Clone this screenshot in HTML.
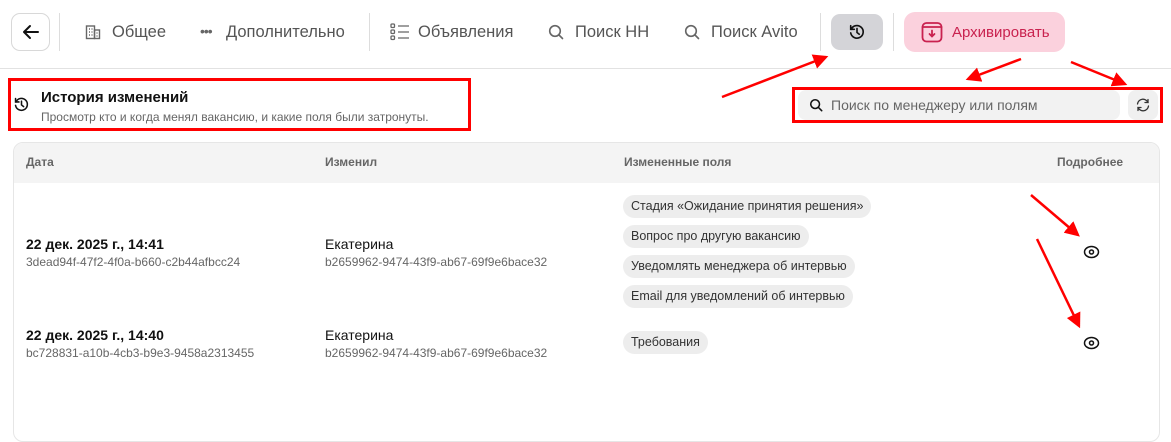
<!DOCTYPE html>
<html><head><meta charset="utf-8"><style>
*{box-sizing:border-box;margin:0;padding:0}
body{width:1171px;height:426px;overflow:hidden;background:#fff;font-family:"Liberation Sans",sans-serif;color:#111;position:relative}
.a{position:absolute}
.nav{font-size:16.5px;color:#555;top:23px}
.sep{position:absolute;width:1px;background:#ddd;top:13px;height:38px}
.chip{position:absolute;left:623px;height:23px;border-radius:12px;background:#ededed;font-size:12.5px;color:#333;padding:0 8px;line-height:23px;white-space:nowrap}
.d{font-size:14px;font-weight:bold;color:#111}
.id{font-size:12px;color:#666}
</style></head><body>
<div class="a" style="left:11px;top:13px;width:39px;height:38px;border:1.5px solid #d8d8d8;border-radius:9px"></div>
<svg class="a" style="left:21px;top:23px" width="20" height="18" viewBox="0 0 20 18"><path d="M17 9H3M9 3L3 9l6 6" stroke="#111" stroke-width="2" fill="none" stroke-linecap="round" stroke-linejoin="round"/></svg>
<div class="sep" style="left:59px"></div>
<svg class="a" style="left:85px;top:24px" width="16" height="16" viewBox="0 0 16 16" fill="none" stroke="#666" stroke-width="1.4"><rect x="1.5" y="2" width="8" height="12.5"/><rect x="9.5" y="6" width="5" height="8.5"/><path d="M4 5h1M6.5 5h1M4 8h1M6.5 8h1M4 11h1M6.5 11h1M11.5 9h1M11.5 12h1"/></svg>
<div class="a nav" style="left:112px">Общее</div>
<div class="a" style="left:200px;top:23px;font-size:14px;color:#666;letter-spacing:-1px">•••</div>
<div class="a nav" style="left:226px">Дополнительно</div>
<div class="sep" style="left:369px"></div>
<svg class="a" style="left:390px;top:23px" width="20" height="18" viewBox="0 0 20 18" fill="none" stroke="#666" stroke-width="1.3"><rect x="1" y="1" width="3.5" height="3.5" rx="1"/><rect x="1" y="7" width="3.5" height="3.5" rx="1"/><rect x="1" y="13" width="3.5" height="3.5" rx="1"/><path d="M8 3h11M8 9h11M8 15h11"/></svg>
<div class="a nav" style="left:418px">Объявления</div>
<svg class="a" style="left:548px;top:24px" width="16" height="16" viewBox="0 0 16 16" fill="none" stroke="#666" stroke-width="1.6"><circle cx="7" cy="7" r="5.3"/><path d="M11 11l3.5 3.5" stroke-linecap="round"/></svg>
<div class="a nav" style="left:575px">Поиск HH</div>
<svg class="a" style="left:684px;top:24px" width="16" height="16" viewBox="0 0 16 16" fill="none" stroke="#666" stroke-width="1.6"><circle cx="7" cy="7" r="5.3"/><path d="M11 11l3.5 3.5" stroke-linecap="round"/></svg>
<div class="a nav" style="left:711px">Поиск Avito</div>
<div class="sep" style="left:820px"></div>
<div class="a" style="left:831px;top:14px;width:52px;height:36px;background:#d4d4d8;border-radius:9px"></div>
<svg class="a" style="left:847px;top:23px" width="20" height="18" viewBox="0 0 20 20" fill="none" stroke="#111" stroke-width="1.8" stroke-linecap="round"><path d="M3.5 7A7 7 0 1 1 3 11"/><path d="M3 3v4h4"/><path d="M10 6v4.5l2.5 2"/></svg>
<div class="sep" style="left:893px"></div>
<div class="a" style="left:904px;top:12px;width:161px;height:40px;background:#fbd1dd;border-radius:11px"></div>
<svg class="a" style="left:920px;top:20px" width="24" height="24" viewBox="0 0 24 24" fill="none" stroke="#c9224f" stroke-width="1.8" stroke-linecap="round"><rect x="2.5" y="3" width="19" height="18.5" rx="4"/><path d="M2.5 7h19"/><path d="M12 10.5v6M9.5 14l2.5 2.5 2.5-2.5"/></svg>
<div class="a" style="left:952px;top:24px;font-size:15px;color:#c9224f">Архивировать</div>
<div class="a" style="left:0;top:68px;width:1171px;height:1px;background:#e2e2e2"></div>

<div class="a" style="left:8px;top:78px;width:463px;height:53px;border:3px solid #f00"></div>
<svg class="a" style="left:13px;top:96px" width="17" height="17" viewBox="0 0 20 20" fill="none" stroke="#111" stroke-width="1.8" stroke-linecap="round"><path d="M3.5 7A7 7 0 1 1 3 11"/><path d="M3 3v4h4"/><path d="M10 6v4.5l2.5 2"/></svg>
<div class="a" style="left:41px;top:89px;font-size:15px;font-weight:bold">История изменений</div>
<div class="a" style="left:41px;top:110px;font-size:12px;color:#666">Просмотр кто и когда менял вакансию, и какие поля были затронуты.</div>

<div class="a" style="left:792px;top:87px;width:371px;height:36px;border:3px solid #f00"></div>
<div class="a" style="left:798px;top:90px;width:322px;height:30px;background:#f2f2f2;border-radius:8px"></div>
<svg class="a" style="left:809px;top:98px" width="14" height="14" viewBox="0 0 16 16" fill="none" stroke="#111" stroke-width="1.8"><circle cx="7" cy="7" r="5"/><path d="M11 11l3.5 3.5" stroke-linecap="round"/></svg>
<div class="a" style="left:831px;top:97px;font-size:14px;color:#666">Поиск по менеджеру или полям</div>
<div class="a" style="left:1128px;top:90px;width:30px;height:30px;background:#f0f0f0;border-radius:8px"></div>
<svg class="a" style="left:1135px;top:97px" width="16" height="16" viewBox="0 0 16 16" fill="none" stroke="#333" stroke-width="1.3" stroke-linecap="round"><path d="M2.5 7A5.5 5.5 0 0 1 13 5.5M13.5 9A5.5 5.5 0 0 1 3 10.5"/><path d="M13 2.5v3h-3M3 13.5v-3h3"/></svg>

<div class="a" style="left:13px;top:142px;width:1147px;height:300px;border:1px solid #e6e6e6;border-radius:10px;overflow:hidden">
<div style="height:40px;background:#f4f4f4"></div></div>
<div class="a" style="left:26px;top:155px;font-size:12px;color:#666;font-weight:bold">Дата</div>
<div class="a" style="left:325px;top:155px;font-size:12px;color:#666;font-weight:bold">Изменил</div>
<div class="a" style="left:624px;top:155px;font-size:12px;color:#666;font-weight:bold">Измененные поля</div>
<div class="a" style="left:1057px;top:155px;font-size:12px;color:#666;font-weight:bold">Подробнее</div>

<div class="a d" style="left:26px;top:236px">22 дек. 2025 г., 14:41</div>
<div class="a id" style="left:26px;top:255px">3dead94f-47f2-4f0a-b660-c2b44afbcc24</div>
<div class="a" style="left:325px;top:236px;font-size:14px">Екатерина</div>
<div class="a id" style="left:325px;top:255px">b2659962-9474-43f9-ab67-69f9e6bace32</div>
<div class="a d" style="left:26px;top:327px">22 дек. 2025 г., 14:40</div>
<div class="a id" style="left:26px;top:346px">bc728831-a10b-4cb3-b9e3-9458a2313455</div>
<div class="a" style="left:325px;top:327px;font-size:14px">Екатерина</div>
<div class="a id" style="left:325px;top:346px">b2659962-9474-43f9-ab67-69f9e6bace32</div>

<div class="chip" style="top:195px">Стадия «Ожидание принятия решения»</div>
<div class="chip" style="top:225px">Вопрос про другую вакансию</div>
<div class="chip" style="top:255px">Уведомлять менеджера об интервью</div>
<div class="chip" style="top:285px">Email для уведомлений об интервью</div>
<div class="chip" style="top:331px">Требования</div>

<svg class="a" style="left:1083px;top:244px" width="17" height="16" viewBox="0 0 17 16" fill="none" stroke="#111" stroke-width="1.5"><ellipse cx="8.5" cy="8" rx="7" ry="5.5"/><circle cx="8.5" cy="8" r="2"/></svg>
<svg class="a" style="left:1083px;top:335px" width="17" height="16" viewBox="0 0 17 16" fill="none" stroke="#111" stroke-width="1.5"><ellipse cx="8.5" cy="8" rx="7" ry="5.5"/><circle cx="8.5" cy="8" r="2"/></svg>

<svg class="a" style="left:0;top:0" width="1171" height="426" fill="none" stroke="#f00" stroke-width="2.5">
<defs><marker id="m" markerWidth="6" markerHeight="6" refX="5" refY="3" orient="auto"><path d="M0 0L6 3L0 6z" fill="#f00" stroke="none"/></marker></defs>
<path d="M722 97L826 57" marker-end="url(#m)"/>
<path d="M1021 59L968 79" marker-end="url(#m)"/>
<path d="M1071 62L1125 84" marker-end="url(#m)"/>
<path d="M1031 195L1078 235" marker-end="url(#m)"/>
<path d="M1037 239L1079 326" marker-end="url(#m)"/>
</svg>
</body></html>
